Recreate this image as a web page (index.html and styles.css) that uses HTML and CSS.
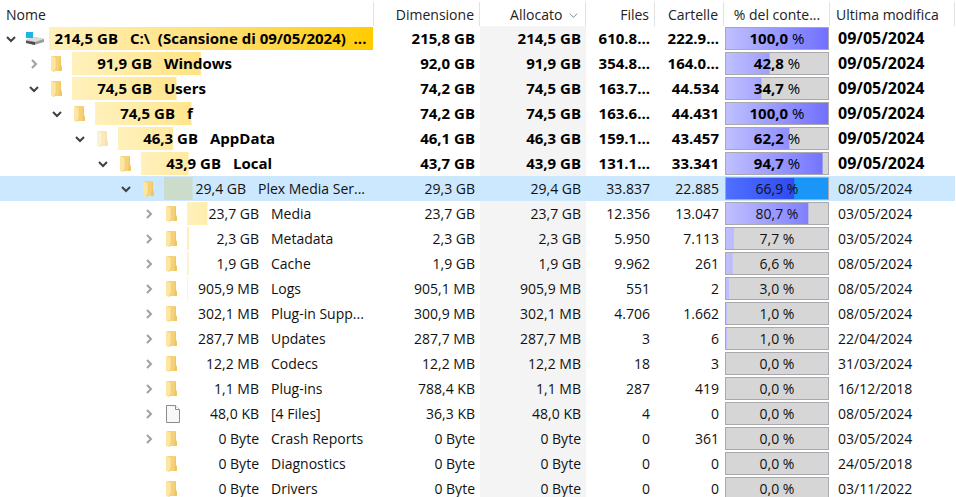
FILE: index.html
```
<!DOCTYPE html>
<html lang="it">
<head>
    <meta charset="UTF-8">
    <meta name="viewport" content="width=device-width, initial-scale=1.0">
    <title>Spazio su disco C:\</title>
    <link rel="stylesheet" href="styles.css">
</head>
<body>
    <svg class="icon-defs" aria-hidden="true">
        <symbol id="chevron" viewBox="0 0 10 10">
            <path d="M1 3l4 4 4-4" fill="none" stroke="currentColor" stroke-width="2"/>
        </symbol>
        <symbol id="sort-arrow" viewBox="0 0 10 10">
            <path d="M1 3l4 4 4-4" fill="none" stroke="currentColor" stroke-width="1"/>
        </symbol>
        <symbol id="folder" viewBox="0 0 12 16">
            <path d="M1 0h9v9l1 2v4H3z" fill="#f5d27a"/>
            <path d="M9 1h1v8l1 2v4H8z" fill="#efc663"/>
            <path d="M0 0l5 2v10l-2 4-3-1z" fill="#fde6a2"/>
            <path d="M5 2v10l-2 4" fill="none" stroke="#f2cd74" stroke-width=".6"/>
        </symbol>
        <symbol id="file" viewBox="0 0 14 18">
            <path d="M.5.5h9l4 4v13H.5z" fill="#f8f8f8" stroke="#8c8c8c"/>
            <path d="M9.500 .5v4h4" fill="#fff" stroke="#8c8c8c"/>
        </symbol>
        <symbol id="drive" viewBox="0 0 18 14">
            <path d="M0 8l8-3 10 2v3l-10 3-8-3z" fill="#9c9c9c"/>
            <path d="M0 8l8-3 10 2-9 3z" fill="#dcdcdc"/>
            <path d="M0 9l9 1v3l-9-2z" fill="#4c4c4c"/>
            <path d="M0 0h7v6H0z" fill="#1fb4e8"/>
        </symbol>
    </svg>

    <main class="tree-view">
        <table class="tree-table">
            <colgroup>
                <col class="col-name">
                <col class="col-size">
                <col class="col-size">
                <col class="col-count">
                <col class="col-count">
                <col class="col-percent">
                <col class="col-date">
            </colgroup>
            <thead>
                <tr>
                    <th class="left">Nome</th>
                    <th>Dimensione</th>
                    <th class="sorted" aria-sort="descending">Allocato <svg class="sort-icon"><use href="#sort-arrow"/></svg></th>
                    <th>Files</th>
                    <th>Cartelle</th>
                    <th class="center">% del conte...</th>
                    <th class="left">Ultima modifica</th>
                </tr>
            </thead>
            <tbody>
                <tr class="bold level-0">
                    <td><div class="node"><button class="toggle open" aria-label="Comprimi C:\"><svg><use href="#chevron"/></svg></button><svg class="icon drive"><use href="#drive"/></svg><div class="bar" style="--share: 100%"><span class="label"><span class="size">214,5 GB</span><span class="name">C:\&nbsp; (Scansione di 09/05/2024)&nbsp; ...</span></span></div></div></td>
                    <td>215,8 GB</td><td class="sorted">214,5 GB</td><td>610.8...</td><td>222.9...</td>
                    <td class="percent"><div class="meter" style="--share: 100%"><span class="value"><b>100,0</b> %</span></div></td>
                    <td class="date">09/05/2024</td>
                </tr>
                <tr class="bold level-1">
                    <td><div class="node"><button class="toggle" aria-label="Espandi Windows"><svg><use href="#chevron"/></svg></button><svg class="icon"><use href="#folder"/></svg><div class="bar" style="--share: 42.8%"><span class="label"><span class="size">91,9 GB</span><span class="name">Windows</span></span></div></div></td>
                    <td>92,0 GB</td><td class="sorted">91,9 GB</td><td>354.8...</td><td>164.0...</td>
                    <td class="percent"><div class="meter" style="--share: 42.8%"><span class="value"><b>42,8</b> %</span></div></td>
                    <td class="date">09/05/2024</td>
                </tr>
                <tr class="bold level-1">
                    <td><div class="node"><button class="toggle open" aria-label="Comprimi Users"><svg><use href="#chevron"/></svg></button><svg class="icon"><use href="#folder"/></svg><div class="bar" style="--share: 34.7%"><span class="label"><span class="size">74,5 GB</span><span class="name">Users</span></span></div></div></td>
                    <td>74,2 GB</td><td class="sorted">74,5 GB</td><td>163.7...</td><td>44.534</td>
                    <td class="percent"><div class="meter" style="--share: 34.7%"><span class="value"><b>34,7</b> %</span></div></td>
                    <td class="date">09/05/2024</td>
                </tr>
                <tr class="bold level-2">
                    <td><div class="node"><button class="toggle open" aria-label="Comprimi f"><svg><use href="#chevron"/></svg></button><svg class="icon"><use href="#folder"/></svg><div class="bar" style="--share: 34.7%"><span class="label"><span class="size">74,5 GB</span><span class="name">f</span></span></div></div></td>
                    <td>74,2 GB</td><td class="sorted">74,5 GB</td><td>163.6...</td><td>44.431</td>
                    <td class="percent"><div class="meter" style="--share: 100%"><span class="value"><b>100,0</b> %</span></div></td>
                    <td class="date">09/05/2024</td>
                </tr>
                <tr class="bold level-3">
                    <td><div class="node"><button class="toggle open" aria-label="Comprimi AppData"><svg><use href="#chevron"/></svg></button><svg class="icon hidden-folder"><use href="#folder"/></svg><div class="bar" style="--share: 21.6%"><span class="label"><span class="size">46,3 GB</span><span class="name">AppData</span></span></div></div></td>
                    <td>46,1 GB</td><td class="sorted">46,3 GB</td><td>159.1...</td><td>43.457</td>
                    <td class="percent"><div class="meter" style="--share: 62.2%"><span class="value"><b>62,2</b> %</span></div></td>
                    <td class="date">09/05/2024</td>
                </tr>
                <tr class="bold level-4">
                    <td><div class="node"><button class="toggle open" aria-label="Comprimi Local"><svg><use href="#chevron"/></svg></button><svg class="icon"><use href="#folder"/></svg><div class="bar" style="--share: 20.5%"><span class="label"><span class="size">43,9 GB</span><span class="name">Local</span></span></div></div></td>
                    <td>43,7 GB</td><td class="sorted">43,9 GB</td><td>131.1...</td><td>33.341</td>
                    <td class="percent"><div class="meter" style="--share: 94.7%"><span class="value"><b>94,7</b> %</span></div></td>
                    <td class="date">09/05/2024</td>
                </tr>
                <tr class="selected level-5">
                    <td><div class="node"><button class="toggle open" aria-label="Comprimi Plex Media Server"><svg><use href="#chevron"/></svg></button><svg class="icon"><use href="#folder"/></svg><div class="bar" style="--share: 13.7%"><span class="label"><span class="size">29,4 GB</span><span class="name">Plex Media Ser...</span></span></div></div></td>
                    <td>29,3 GB</td><td class="sorted">29,4 GB</td><td>33.837</td><td>22.885</td>
                    <td class="percent"><div class="meter" style="--share: 66.9%"><span class="value">66,9 %</span></div></td>
                    <td class="date">08/05/2024</td>
                </tr>
                <tr class="level-6">
                    <td><div class="node"><button class="toggle" aria-label="Espandi Media"><svg><use href="#chevron"/></svg></button><svg class="icon"><use href="#folder"/></svg><div class="bar" style="--share: 11%"><span class="label"><span class="size">23,7 GB</span><span class="name">Media</span></span></div></div></td>
                    <td>23,7 GB</td><td class="sorted">23,7 GB</td><td>12.356</td><td>13.047</td>
                    <td class="percent"><div class="meter" style="--share: 80.7%"><span class="value">80,7 %</span></div></td>
                    <td class="date">03/05/2024</td>
                </tr>
                <tr class="level-6">
                    <td><div class="node"><button class="toggle" aria-label="Espandi Metadata"><svg><use href="#chevron"/></svg></button><svg class="icon"><use href="#folder"/></svg><div class="bar" style="--share: 1.1%"><span class="label"><span class="size">2,3 GB</span><span class="name">Metadata</span></span></div></div></td>
                    <td>2,3 GB</td><td class="sorted">2,3 GB</td><td>5.950</td><td>7.113</td>
                    <td class="percent"><div class="meter" style="--share: 7.7%"><span class="value">7,7 %</span></div></td>
                    <td class="date">03/05/2024</td>
                </tr>
                <tr class="level-6">
                    <td><div class="node"><button class="toggle" aria-label="Espandi Cache"><svg><use href="#chevron"/></svg></button><svg class="icon"><use href="#folder"/></svg><div class="bar" style="--share: 0.9%"><span class="label"><span class="size">1,9 GB</span><span class="name">Cache</span></span></div></div></td>
                    <td>1,9 GB</td><td class="sorted">1,9 GB</td><td>9.962</td><td>261</td>
                    <td class="percent"><div class="meter" style="--share: 6.6%"><span class="value">6,6 %</span></div></td>
                    <td class="date">08/05/2024</td>
                </tr>
                <tr class="level-6">
                    <td><div class="node"><button class="toggle" aria-label="Espandi Logs"><svg><use href="#chevron"/></svg></button><svg class="icon"><use href="#folder"/></svg><div class="bar" style="--share: 0.4%"><span class="label"><span class="size">905,9 MB</span><span class="name">Logs</span></span></div></div></td>
                    <td>905,1 MB</td><td class="sorted">905,9 MB</td><td>551</td><td>2</td>
                    <td class="percent"><div class="meter" style="--share: 3%"><span class="value">3,0 %</span></div></td>
                    <td class="date">08/05/2024</td>
                </tr>
                <tr class="level-6">
                    <td><div class="node"><button class="toggle" aria-label="Espandi Plug-in Support"><svg><use href="#chevron"/></svg></button><svg class="icon"><use href="#folder"/></svg><div class="bar" style="--share: 0%"><span class="label"><span class="size">302,1 MB</span><span class="name">Plug-in Supp...</span></span></div></div></td>
                    <td>300,9 MB</td><td class="sorted">302,1 MB</td><td>4.706</td><td>1.662</td>
                    <td class="percent"><div class="meter" style="--share: 1%"><span class="value">1,0 %</span></div></td>
                    <td class="date">08/05/2024</td>
                </tr>
                <tr class="level-6">
                    <td><div class="node"><button class="toggle" aria-label="Espandi Updates"><svg><use href="#chevron"/></svg></button><svg class="icon"><use href="#folder"/></svg><div class="bar" style="--share: 0%"><span class="label"><span class="size">287,7 MB</span><span class="name">Updates</span></span></div></div></td>
                    <td>287,7 MB</td><td class="sorted">287,7 MB</td><td>3</td><td>6</td>
                    <td class="percent"><div class="meter" style="--share: 1%"><span class="value">1,0 %</span></div></td>
                    <td class="date">22/04/2024</td>
                </tr>
                <tr class="level-6">
                    <td><div class="node"><button class="toggle" aria-label="Espandi Codecs"><svg><use href="#chevron"/></svg></button><svg class="icon"><use href="#folder"/></svg><div class="bar" style="--share: 0%"><span class="label"><span class="size">12,2 MB</span><span class="name">Codecs</span></span></div></div></td>
                    <td>12,2 MB</td><td class="sorted">12,2 MB</td><td>18</td><td>3</td>
                    <td class="percent"><div class="meter" style="--share: 0%"><span class="value">0,0 %</span></div></td>
                    <td class="date">31/03/2024</td>
                </tr>
                <tr class="level-6">
                    <td><div class="node"><button class="toggle" aria-label="Espandi Plug-ins"><svg><use href="#chevron"/></svg></button><svg class="icon"><use href="#folder"/></svg><div class="bar" style="--share: 0%"><span class="label"><span class="size">1,1 MB</span><span class="name">Plug-ins</span></span></div></div></td>
                    <td>788,4 KB</td><td class="sorted">1,1 MB</td><td>287</td><td>419</td>
                    <td class="percent"><div class="meter" style="--share: 0%"><span class="value">0,0 %</span></div></td>
                    <td class="date">16/12/2018</td>
                </tr>
                <tr class="level-6">
                    <td><div class="node"><button class="toggle" aria-label="Espandi 4 Files"><svg><use href="#chevron"/></svg></button><svg class="icon file"><use href="#file"/></svg><div class="bar" style="--share: 0%"><span class="label"><span class="size">48,0 KB</span><span class="name">[4 Files]</span></span></div></div></td>
                    <td>36,3 KB</td><td class="sorted">48,0 KB</td><td>4</td><td>0</td>
                    <td class="percent"><div class="meter" style="--share: 0%"><span class="value">0,0 %</span></div></td>
                    <td class="date">08/05/2024</td>
                </tr>
                <tr class="level-6">
                    <td><div class="node"><button class="toggle" aria-label="Espandi Crash Reports"><svg><use href="#chevron"/></svg></button><svg class="icon"><use href="#folder"/></svg><div class="bar" style="--share: 0%"><span class="label"><span class="size">0 Byte</span><span class="name">Crash Reports</span></span></div></div></td>
                    <td>0 Byte</td><td class="sorted">0 Byte</td><td>0</td><td>361</td>
                    <td class="percent"><div class="meter" style="--share: 0%"><span class="value">0,0 %</span></div></td>
                    <td class="date">03/05/2024</td>
                </tr>
                <tr class="level-6">
                    <td><div class="node"><span class="toggle"></span><svg class="icon"><use href="#folder"/></svg><div class="bar" style="--share: 0%"><span class="label"><span class="size">0 Byte</span><span class="name">Diagnostics</span></span></div></div></td>
                    <td>0 Byte</td><td class="sorted">0 Byte</td><td>0</td><td>0</td>
                    <td class="percent"><div class="meter" style="--share: 0%"><span class="value">0,0 %</span></div></td>
                    <td class="date">24/05/2018</td>
                </tr>
                <tr class="level-6">
                    <td><div class="node"><span class="toggle"></span><svg class="icon"><use href="#folder"/></svg><div class="bar" style="--share: 0%"><span class="label"><span class="size">0 Byte</span><span class="name">Drivers</span></span></div></div></td>
                    <td>0 Byte</td><td class="sorted">0 Byte</td><td>0</td><td>0</td>
                    <td class="percent"><div class="meter" style="--share: 0%"><span class="value">0,0 %</span></div></td>
                    <td class="date">03/11/2022</td>
                </tr>
            </tbody>
        </table>
    </main>
</body>
</html>
```

FILE: styles.css
```
body {
    margin: 0;
    font-family: "Open Sans", "Noto Sans", sans-serif;
    font-size: 14px;
    line-height: 23px;
    color: #111;
    background-color: #fff;
}
.icon-defs {
    display: none;
}
.tree-view {
    height: 100vh;
    padding-right: 1px;
    overflow: hidden;
}
.tree-table {
    width: 100%;
    table-layout: fixed;
    border-collapse: collapse;
}
.col-size,
.col-percent {
    width: 106px;
}
.col-count {
    width: 69px;
}
.col-date {
    width: 125px;
}

/* Header */
th {
    box-sizing: border-box;
    height: 26px;
    padding: 3px 6px 0;
    font-weight: normal;
    text-align: right;
    white-space: nowrap;
    color: #222;
    background: linear-gradient(#e2e2e2, #e2e2e2) right bottom / 1px 24px no-repeat;
}
th.left {
    text-align: left;
}
th.center {
    text-align: center;
}
.sort-icon {
    width: 9px;
    height: 9px;
    margin-left: 3px;
    margin-right: 2px;
    color: #777;
}

/* Rows */
td {
    height: 25px;
    padding: 0 5px;
    text-align: right;
    white-space: nowrap;
}
td:first-child {
    padding: 0 1px 0 0;
    text-align: left;
}
td.sorted {
    background-color: #f4f4f4;
}
td.percent {
    padding: 0 1px;
}
td.date {
    padding-left: 8px;
    text-align: left;
}
.bold td {
    font-size: 15px;
    font-weight: bold;
    color: #000;
}
.bold td.date {
    font-size: 16px;
}
.selected td,
.selected td.sorted {
    background-color: #cce8ff;
}

/* Tree nodes */
.node {
    display: flex;
    align-items: center;
    padding-left: calc(var(--level) * 23px);
}
.level-0 { --level: 0; }
.level-1 { --level: 1; }
.level-2 { --level: 2; }
.level-3 { --level: 3; }
.level-4 { --level: 4; }
.level-5 { --level: 5; }
.level-6 { --level: 6; }
.toggle {
    display: flex;
    align-items: center;
    justify-content: center;
    flex: none;
    width: 22px;
    height: 23px;
    padding: 0;
    border: none;
    background: none;
    color: #a0a0a0;
}
.toggle svg {
    width: 10px;
    height: 10px;
    transform: rotate(-90deg);
}
.toggle.open {
    color: #404040;
}
.toggle.open svg {
    transform: none;
}
.icon {
    flex: none;
    width: 12px;
    height: 16px;
    margin: 0 9px 0 6px;
}
.icon.drive {
    width: 18px;
    height: 14px;
    margin: 0 5px 0 4px;
}
.icon.file {
    width: 14px;
    height: 18px;
    margin: 0 7px 0 6px;
}
.hidden-folder {
    opacity: 0.5;
}
.bar,
.meter {
    display: grid;
    flex: 1;
    min-width: 0;
    height: 23px;
}
.bar::before,
.meter::before {
    content: "";
    grid-area: 1 / 1;
    clip-path: inset(0 calc(100% - var(--share)) 0 0);
}
.bar::before {
    background: linear-gradient(to right, #fff1bc, #ffe07a 50%, #ffcc00);
}
.selected .bar::before {
    background: #cbdccb;
}
.label {
    grid-area: 1 / 1;
    display: flex;
    gap: 12px;
    z-index: 1;
}
.size {
    width: 80px;
    text-align: right;
}
.level-0 .size {
    width: 69px;
}
.level-5 .size {
    width: 82px;
}
.level-6 .size {
    width: 72px;
}

/* Percentage of parent */
.meter {
    box-sizing: border-box;
    border: 1px solid #a8a8ae;
    background-color: #d6d6d6;
}
.meter::before {
    background: linear-gradient(to right, #c0c0ff, #7070ff);
}
.selected .meter {
    background-color: #1a96f8;
}
.selected .meter::before {
    background: linear-gradient(to right, #5070ff, #2038e8);
}
.value {
    grid-area: 1 / 1;
    z-index: 1;
    line-height: 21px;
    font-weight: normal;
    text-align: center;
}
```
